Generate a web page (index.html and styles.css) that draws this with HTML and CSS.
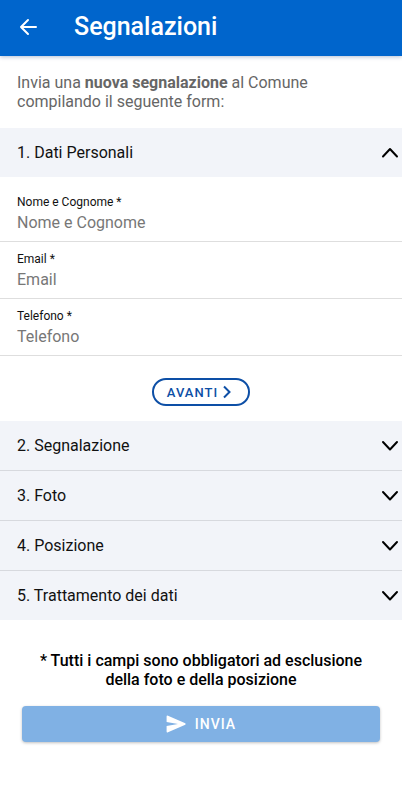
FILE: index.html
```html
<!DOCTYPE html>
<html lang="it">
<head>
<meta charset="utf-8">
<meta name="viewport" content="width=device-width, initial-scale=1">
<title>Segnalazioni</title>
<link rel="stylesheet" href="styles.css">
</head>
<body>
<header class="app-bar">
  <button class="back" type="button" aria-label="Indietro">
    <svg width="20" height="18" viewBox="0 0 20 18" fill="none" stroke="currentColor" stroke-width="2" stroke-linecap="round" stroke-linejoin="round"><path d="M10 2 3 9l7 7M3 9h15"/></svg>
  </button>
  <h1 class="title">Segnalazioni</h1>
</header>
<main>
  <p class="intro">Invia una <strong>nuova segnalazione</strong> al Comune<br>compilando il seguente form:</p>
  <form>
    <button class="section" type="button" aria-expanded="true">1. Dati Personali
      <svg class="chevron" viewBox="0 0 18 12"><path d="M2 9.500 9 2l7 7.500"/></svg>
    </button>
    <div class="fields">
      <div class="field">
        <label for="nome">Nome e Cognome *</label>
        <input id="nome" type="text" placeholder="Nome e Cognome">
      </div>
      <div class="field">
        <label for="email">Email *</label>
        <input id="email" type="email" placeholder="Email">
      </div>
      <div class="field">
        <label for="telefono">Telefono *</label>
        <input id="telefono" type="tel" placeholder="Telefono">
      </div>
    </div>
    <div class="step">
      <button class="next" type="button">AVANTI
        <svg width="8" height="14" viewBox="0 0 8 14" fill="none" stroke="currentColor" stroke-width="2"><path d="M1 1.500 6.500 7 1 12.500"/></svg>
      </button>
    </div>
    <div class="sections">
      <button class="section" type="button" aria-expanded="false">2. Segnalazione
        <svg class="chevron" viewBox="0 0 18 12"><path d="M2 2 9 9.500 16 2"/></svg>
      </button>
      <button class="section" type="button" aria-expanded="false">3. Foto
        <svg class="chevron" viewBox="0 0 18 12"><path d="M2 2 9 9.500 16 2"/></svg>
      </button>
      <button class="section" type="button" aria-expanded="false">4. Posizione
        <svg class="chevron" viewBox="0 0 18 12"><path d="M2 2 9 9.500 16 2"/></svg>
      </button>
      <button class="section" type="button" aria-expanded="false">5. Trattamento dei dati
        <svg class="chevron" viewBox="0 0 18 12"><path d="M2 2 9 9.500 16 2"/></svg>
      </button>
    </div>
    <p class="note">* Tutti i campi sono obbligatori ad esclusione della foto e della posizione</p>
    <button class="submit" type="submit" disabled>
      <svg width="20" height="18" viewBox="0 0 20 18" fill="currentColor"><path d="M.6 1.600Q.6.200 2 .800L19.300 8.300Q20 9 19.300 9.700L2 17.200Q.6 17.800.6 16.400V11L12 9 .6 7z"/></svg>
      INVIA
    </button>
  </form>
</main>
</body>
</html>
```
FILE: styles.css
```css
* {
  box-sizing: border-box;
}

body {
  margin: 0;
  background: #fff;
  color: #111;
  font: 16px/19px Roboto, sans-serif;
}

button,
input {
  margin: 0;
  padding: 0;
  border: 0;
  background: none;
  color: inherit;
  font: inherit;
}

.app-bar {
  display: flex;
  align-items: center;
  gap: 36px;
  height: 56px;
  padding: 0 18px 2px;
  background: #0065cc;
  color: #fff;
  box-shadow: 0 1px 4px rgba(0, 50, 120, 0.3);
}

.back {
  display: flex;
}

.title {
  margin: 0;
  font-size: 25px;
  line-height: 32px;
  font-weight: 500;
}

.intro {
  margin: 0;
  padding: 17px;
  color: #666;
}

.section {
  display: flex;
  align-items: center;
  justify-content: space-between;
  width: 100%;
  height: 49px;
  padding: 0 3px 0 17px;
  background: #f2f4f9;
}

.sections .section + .section {
  height: 50px;
  border-top: 1px solid #d7d9de;
}

.chevron {
  width: 18px;
  height: 12px;
  fill: none;
  stroke: #000;
  stroke-width: 2;
  stroke-linecap: round;
  stroke-linejoin: round;
}

.fields {
  padding-top: 8px;
}

.field {
  display: flex;
  flex-direction: column;
  height: 57px;
  padding: 9px 17px 0;
  border-bottom: 1px solid #dedede;
}

.field label {
  font-size: 12px;
  line-height: 16px;
}

.field input {
  width: 100%;
  height: 24px;
}

.field input::placeholder {
  color: #777;
  opacity: 1;
}

.step {
  display: flex;
  justify-content: center;
  padding: 22px 0 15px;
}

.next {
  display: flex;
  align-items: center;
  gap: 5px;
  height: 28px;
  padding: 0 17px 0 13px;
  border: 2px solid #0d4fa6;
  border-radius: 14px;
  color: #0d4fa6;
  font-size: 13px;
  font-weight: 500;
  letter-spacing: 1px;
}

.note {
  margin: 0;
  padding: 31px 24px 17px;
  color: #000;
  font-weight: 500;
  text-align: center;
}

.submit {
  display: flex;
  align-items: center;
  justify-content: center;
  gap: 9px;
  width: calc(100% - 44px);
  height: 36px;
  margin: 0 22px 24px;
  border-radius: 4px;
  background: #80b1e4;
  color: #fff;
  font-size: 14px;
  font-weight: 500;
  letter-spacing: 1px;
  box-shadow: 0 1px 3px rgba(0, 0, 0, 0.25);
}
```
